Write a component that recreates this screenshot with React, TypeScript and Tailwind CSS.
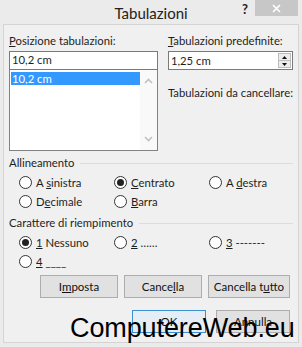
import React from "react";

const Radio = ({ checked, children }: { checked?: boolean; children: React.ReactNode }) => (
  <label className="flex items-center gap-[4px]">
    <span className="w-[13px] h-[13px] rounded-full border border-[#333] bg-white flex items-center justify-center">
      {checked && <span className="w-[7px] h-[7px] rounded-full bg-[#222]" />}
    </span>
    <span>{children}</span>
  </label>
);

const Button = ({ children, focus, w }: { children: React.ReactNode; focus?: boolean; w: string }) => (
  <button
    className={`${w} h-[23px] text-[11.5px] text-[#111] border ${
      focus ? "border-[#3c8fd0] bg-[#e5eef6]" : "border-[#adadad] bg-[#e1e1e1]"
    }`}
  >
    {children}
  </button>
);

const Chevron = ({ down }: { down?: boolean }) => (
  <svg width="9" height="6" viewBox="0 0 9 6" className={down ? "rotate-180" : ""}>
    <path d="M1 5 L4.5 1.5 L8 5" fill="none" stroke="#c2c2c2" strokeWidth="1.6" />
  </svg>
);

const App = () => {
  return (
    <div
      className="relative w-[302px] h-[347px] bg-[#ebebeb] text-[11.3px] text-[#1e1e1e] overflow-hidden"
      style={{ fontFamily: "Lato, 'Noto Sans', sans-serif" }}
    >
      {/* Title bar */}
      <div className="relative h-[24px] flex items-center justify-center">
        <span className="text-[15px] text-[#222] mt-[2px]">Tabulazioni</span>
        <span className="absolute left-[242px] top-[0px] text-[13px] font-bold text-[#222]">?</span>
        <div className="absolute right-[4px] top-0 w-[43px] h-[16px] bg-[#c7c7c7] flex items-center justify-center">
          <svg width="9" height="9" viewBox="0 0 9 9">
            <path d="M1 1 L8 8 M8 1 L1 8" stroke="#fff" strokeWidth="1.6" />
          </svg>
        </div>
      </div>

      {/* Body */}
      <div className="mx-[3px] h-[319px] bg-[#f0f0f0] border border-[#d4d4d4] px-[5px] pt-[7px]">
        <div className="flex gap-[10px]">
          <div className="w-[152px] flex flex-col">
            <div className="h-[18px] leading-[18px]">
              <u>P</u>osizione tabulazioni:
            </div>
            <div className="mt-[1px] h-[19px] bg-white border border-[#7a7a7a] px-[2px] leading-[16px]">10,2 cm</div>
            <div className="h-[81px] bg-white border border-[#828282] border-t-0 flex">
              <div className="flex-1 pt-[2px] pl-[1px]">
                <div className="bg-[#3399ff] text-white h-[13px] leading-[13px] px-[1px]">10,2 cm</div>
              </div>
              <div className="w-[17px] flex flex-col items-center justify-between py-[8px] bg-[#f9f9f9]">
                <Chevron />
                <Chevron down />
              </div>
            </div>
          </div>
          <div className="flex-1 flex flex-col">
            <div className="h-[18px] leading-[18px]">
              <u>T</u>abulazioni predefinite:
            </div>
            <div className="mt-[1px] h-[19px] bg-white border border-[#7a7a7a] pl-[2px] flex items-center justify-between">
              <span className="leading-[16px]">1,25 cm</span>
              <div className="w-[13px] h-[15px] mr-[1px] flex flex-col border border-[#bcbcbc] bg-[#ececec]">
                <div className="flex-1 flex items-center justify-center border-b border-[#bcbcbc]">
                  <svg width="5" height="3" viewBox="0 0 5 3"><path d="M0 3 L2.5 0 L5 3Z" fill="#111" /></svg>
                </div>
                <div className="flex-1 flex items-center justify-center">
                  <svg width="5" height="3" viewBox="0 0 5 3"><path d="M0 0 L2.5 3 L5 0Z" fill="#111" /></svg>
                </div>
              </div>
            </div>
            <div className="mt-[15px] whitespace-nowrap">Tabulazioni da cancellare:</div>
          </div>
        </div>

        {/* Allineamento */}
        <div className="mt-[4px] flex items-center gap-[6px]">
          <span>Allineamento</span>
          <div className="flex-1 h-px bg-[#dcdcdc]" />
        </div>
        <div className="mt-[2px] pl-[10px] grid grid-cols-[95px_95px_1fr] gap-y-[2px] leading-[17px]">
          <Radio>A <u>s</u>inistra</Radio>
          <Radio checked><u>C</u>entrato</Radio>
          <Radio>A <u>d</u>estra</Radio>
          <Radio>D<u>e</u>cimale</Radio>
          <Radio><u>B</u>arra</Radio>
        </div>

        {/* Carattere di riempimento */}
        <div className="mt-[5px] flex items-center gap-[6px]">
          <span>Carattere di riempimento</span>
          <div className="flex-1 h-px bg-[#dcdcdc]" />
        </div>
        <div className="mt-[2px] pl-[10px] grid grid-cols-[95px_95px_1fr] gap-y-[2px] leading-[17px]">
          <Radio checked><u>1</u> Nessuno</Radio>
          <Radio><u>2</u> ……</Radio>
          <Radio><u>3</u> -------</Radio>
          <Radio><u>4</u> ____</Radio>
        </div>

        <div className="mt-[5px] flex justify-end gap-[6px] pr-[3px]">
          <Button w="w-[78px]">I<u>m</u>posta</Button>
          <Button w="w-[78px]">Cance<u>l</u>la</Button>
          <Button w="w-[82px]">Cancella t<u>u</u>tto</Button>
        </div>
        <div className="mt-[12px] flex justify-end gap-[10px] pr-[3px]">
          <Button w="w-[74px]" focus>OK</Button>
          <Button w="w-[74px]">Annulla</Button>
        </div>
      </div>

      {/* Watermark */}
      <div
        className="absolute left-[70px] top-[315px] text-[27px] leading-none text-black tracking-[-0.1px]"
        style={{ fontFamily: "'Liberation Sans', Arial, sans-serif" }}
      >
        ComputereWeb.eu
      </div>
    </div>
  );
};

export default App;
